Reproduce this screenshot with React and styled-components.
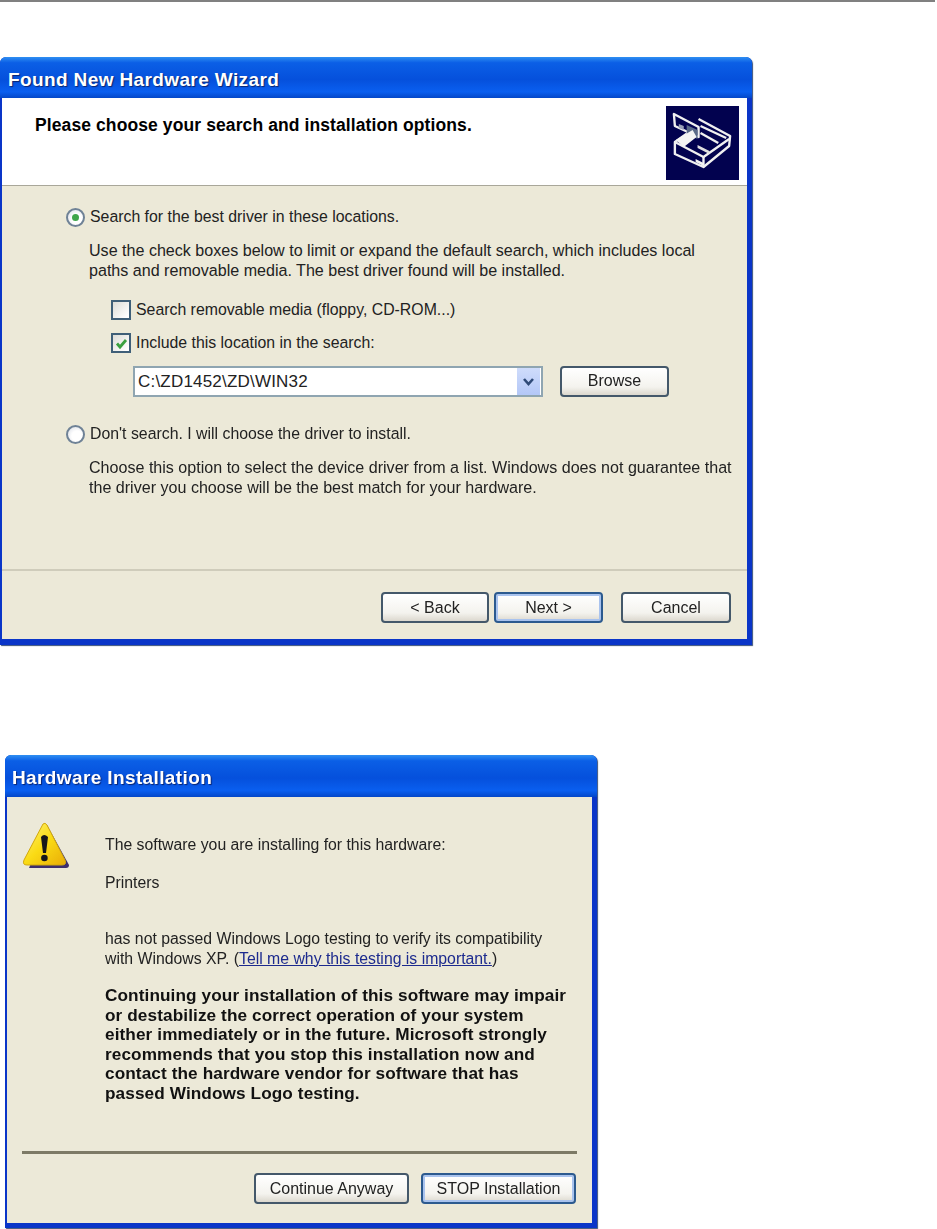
import React from "react";
import styled, { createGlobalStyle } from "styled-components";

const Global = createGlobalStyle`
  html, body { margin: 0; background: #fff; }
  body { font-family: "Liberation Sans", Arial, sans-serif; color: #222; }
`;

const Page = styled.div`
  width: 937px;
  height: 1229px;
  overflow: hidden;
  filter: blur(0.35px);
`;

const Rule = styled.div`
  height: 2px;
  width: 935px;
  background: #808080;
  margin-bottom: 55px;
`;

const Window = styled.div`
  display: flex;
  flex-direction: column;
  box-sizing: border-box;
  width: ${(p) => p.$w}px;
  height: ${(p) => p.$h}px;
  margin-left: ${(p) => p.$left || 0}px;
  margin-top: ${(p) => p.$top || 0}px;
  background: #0a35c8;
  border-radius: 6px 6px 0 0;
  padding: 0 5px ${(p) => p.$foot}px 2px;
  box-shadow: 1px 1px 1px #39507a;
`;

const TitleBar = styled.div`
  flex: none;
  height: ${(p) => p.$h}px;
  box-sizing: border-box;
  margin: 0 -5px 0 -2px;
  padding: 4px 0 0 ${(p) => p.$pad}px;
  display: flex;
  align-items: center;
  border-radius: 6px 6px 0 0;
  background: linear-gradient(180deg, #2f8ff2 0%, #0b5fe6 14%, #0550dc 55%, #0a5ff0 85%, #0447c8 100%);
  color: #fff;
  font-size: 19px;
  font-weight: bold;
  letter-spacing: 0.38px;
  text-shadow: 1px 1px 1px #0a2470;
`;

const Header = styled.div`
  flex: none;
  height: 88px;
  box-sizing: border-box;
  background: #fff;
  border-bottom: 1px solid #a9a79a;
  display: flex;
  justify-content: space-between;
  padding: 8px 8px 0 33px;
`;

const HeaderText = styled.div`
  font-size: 17.5px;
  font-weight: bold;
  letter-spacing: 0.1px;
  color: #000;
  line-height: 20px;
  margin-top: 9px;
`;

const Body = styled.div`
  flex: 1;
  background: #ece9d8;
  display: flex;
  flex-direction: column;
  padding-top: ${(p) => p.$top || 0}px;
`;

const Row = styled.div`
  display: flex;
  align-items: center;
  height: ${(p) => p.$h || 20}px;
  margin-top: ${(p) => p.$mt || 0}px;
  margin-left: ${(p) => p.$ml || 0}px;
`;

const Label = styled.span`
  font-size: 15.85px;
  line-height: 20px;
  white-space: nowrap;
  margin-left: 5px;
`;

const Para = styled.div`
  font-size: ${(p) => p.$size || 16.08}px;
  line-height: ${(p) => p.$lh || 20}px;
  white-space: pre;
  margin-top: ${(p) => p.$mt || 13}px;
  margin-left: ${(p) => p.$ml || 0}px;
`;

const Radio = styled.span`
  flex: none;
  width: 19px;
  height: 19px;
  box-sizing: border-box;
  border-radius: 50%;
  border: 2px solid #6f8296;
  background: radial-gradient(circle at 60% 60%, #fff 40%, #d5d9e2 100%);
  display: flex;
  align-items: center;
  justify-content: center;
  &::after {
    content: "";
    display: ${(p) => (p.$on ? "block" : "none")};
    width: 7px;
    height: 7px;
    border-radius: 50%;
    background: #3fa64a;
  }
`;

const Check = styled.span`
  flex: none;
  width: 20px;
  height: 20px;
  box-sizing: border-box;
  border: 2px solid #3f5f78;
  background: linear-gradient(135deg, #dcdcd7 0%, #fff 90%);
  display: flex;
  align-items: center;
  justify-content: center;
`;

const Combo = styled.div`
  width: 410px;
  height: 31px;
  margin-top: 1px;
  box-sizing: border-box;
  border: 2px solid #8fa5b1;
  background: #fff;
  display: flex;
  align-items: center;
  justify-content: space-between;
  padding: 0 1px 0 3px;
  font-size: 17px;
  letter-spacing: 0.2px;
`;

const ComboArrow = styled.span`
  width: 23px;
  height: 27px;
  background: linear-gradient(180deg, #cfdcfb, #b3c7f7);
  display: flex;
  align-items: center;
  justify-content: center;
`;

const Button = styled.div`
  flex: none;
  width: ${(p) => p.$w}px;
  height: 31px;
  box-sizing: border-box;
  margin-left: ${(p) => p.$ml || 0}px;
  border: 2px solid ${(p) => (p.$focus ? "#2c5a8f" : "#44586a")};
  border-radius: 4px;
  background: linear-gradient(180deg, #fff 0%, #f4f3ee 70%, #dcd8ce 100%);
  box-shadow: ${(p) => (p.$focus ? "inset 0 0 0 2px #a9c3ee" : "none")};
  display: flex;
  align-items: center;
  justify-content: center;
  font-size: 16px;
  color: #222;
`;

const Footer = styled.div`
  margin-top: auto;
  flex: none;
  border-top: 2px solid #cfccbb;
  height: 70px;
  box-sizing: border-box;
  padding: 21px 16px 0 0;
  display: flex;
  justify-content: flex-end;
`;

const BoldBlock = styled.div`
  font-size: 17.2px;
  font-weight: bold;
  letter-spacing: 0.1px;
  color: #111;
  line-height: 19.6px;
  margin-top: 18px;
  white-space: pre-line;
`;

const Link = styled.span`
  color: #1c2a8e;
  text-decoration: underline;
`;

const Columns = styled.div`
  display: flex;
  padding-top: 25px;
`;

const IconSlot = styled.div`
  flex: none;
  width: 98px;
  padding-left: 15px;
  box-sizing: border-box;
`;

const Divider = styled.div`
  height: 3px;
  background: #7d7a66;
  margin: auto 15px 0 15px;
`;

const DialogButtons = styled.div`
  display: flex;
  justify-content: flex-end;
  padding: 19px 16px 19px 0;
`;

const HardwareIcon = () => (
  <svg width="73" height="74" viewBox="0 0 74 74" preserveAspectRatio="none">
    <rect width="74" height="74" fill="#02024f" />
    <g fill="none" stroke="#f0f0f0" strokeWidth="2.4" strokeLinejoin="round">
      <path d="M8 8 L33 21 L33 31 L9 20 Z" />
      <path d="M33 13 L65 30 L64 40 L38 61 L9 48 L9 36 L22 27" />
      <path d="M9 36 L38 51 L64 33" />
      <path d="M38 51 L38 61" />
      <path d="M35 20 L61 32" />
      <path d="M35 27 L53 37" />
    </g>
    <path d="M13 18 L18 20 L18 24 L13 22 Z" fill="#9aa0b8" />
    <path d="M21 19 L32 24 L32 33 L21 28 Z" fill="#5a6a88" />
    <path d="M10 34 L27 24 L31 31 L18 41 Z" fill="#f4f4f4" />
    <path d="M30 53 L38 57 L38 60 L30 56 Z" fill="#f4f4f4" />
    <path d="M32 39 L44 45 L44 48 L32 42 Z" fill="#e0e0e0" />
  </svg>
);

const WarningIcon = () => (
  <svg width="48" height="48" viewBox="0 0 48 48">
    <defs>
      <linearGradient id="warnFill" x1="0" y1="0" x2="1" y2="1">
        <stop offset="0" stopColor="#fff27a" />
        <stop offset="0.5" stopColor="#fadb14" />
        <stop offset="1" stopColor="#e9ac07" />
      </linearGradient>
    </defs>
    <path d="M25 3 L47 43 Q47 46 44 46 L7 46 Z" fill="#3d2f6e" />
    <path
      d="M21 2 Q23 0 25 3 L43 38 Q45 43 40 43 L5 43 Q0 43 2 38 Z"
      fill="url(#warnFill)"
      stroke="#d2a80c"
      strokeWidth="1"
    />
    <path d="M19 15 Q22 11 26 15 L24 31 L21 31 Z" fill="#17171b" />
    <circle cx="22.4" cy="36" r="3.3" fill="#17171b" />
  </svg>
);

const Tick = () => (
  <svg width="13" height="13" viewBox="0 0 13 13">
    <path d="M2 6.5 L5 10 L11 3" fill="none" stroke="#3aa03f" strokeWidth="2.8" />
  </svg>
);

const Chevron = () => (
  <svg width="13" height="10" viewBox="0 0 13 10">
    <path d="M2 2 L6.5 7 L11 2" fill="none" stroke="#2f4a78" strokeWidth="2.6" />
  </svg>
);

export default function App() {
  return (
    <Page>
      <Global />
      <Rule />

      <Window $w={752} $h={588} $foot={6}>
        <TitleBar $h={41} $pad={8}>Found New Hardware Wizard</TitleBar>
        <Header>
          <HeaderText>Please choose your search and installation options.</HeaderText>
          <HardwareIcon />
        </Header>
        <Body $top={21}>
          <Row $ml={64}>
            <Radio $on />
            <Label>Search for the best driver in these locations.</Label>
          </Row>
          <Para $ml={87}>
            {"Use the check boxes below to limit or expand the default search, which includes local\npaths and removable media. The best driver found will be installed."}
          </Para>
          <Row $ml={109} $mt={20}>
            <Check />
            <Label>Search removable media (floppy, CD-ROM...)</Label>
          </Row>
          <Row $ml={109} $mt={13}>
            <Check><Tick /></Check>
            <Label>Include this location in the search:</Label>
          </Row>
          <Row $ml={131} $mt={12} $h={32}>
            <Combo>
              C:\ZD1452\ZD\WIN32
              <ComboArrow><Chevron /></ComboArrow>
            </Combo>
            <Button $w={109} $ml={17}>Browse</Button>
          </Row>
          <Row $ml={64} $mt={27}>
            <Radio />
            <Label>Don't search. I will choose the driver to install.</Label>
          </Row>
          <Para $ml={87}>
            {"Choose this option to select the device driver from a list. Windows does not guarantee that\nthe driver you choose will be the best match for your hardware."}
          </Para>
          <Footer>
            <Button $w={108}>&lt; Back</Button>
            <Button $w={109} $ml={5} $focus>Next &gt;</Button>
            <Button $w={110} $ml={18}>Cancel</Button>
          </Footer>
        </Body>
      </Window>

      <Window $w={592} $h={473} $left={5} $top={110} $foot={5}>
        <TitleBar $h={42} $pad={7}>Hardware Installation</TitleBar>
        <Body>
          <Columns>
            <IconSlot><WarningIcon /></IconSlot>
            <div>
              <Para $mt={13} $size={15.8}>The software you are installing for this hardware:</Para>
              <Para $mt={18} $size={15.8}>Printers</Para>
              <Para $mt={36} $size={15.8} $lh={19.5}>
                has not passed Windows Logo testing to verify its compatibility
                <br />
                with Windows XP. (<Link>Tell me why this testing is important.</Link>)
              </Para>
              <BoldBlock>
                {"Continuing your installation of this software may impair\nor destabilize the correct operation of your system\neither immediately or in the future. Microsoft strongly\nrecommends that you stop this installation now and\ncontact the hardware vendor for software that has\npassed Windows Logo testing."}
              </BoldBlock>
            </div>
          </Columns>
          <Divider />
          <DialogButtons>
            <Button $w={155}>Continue Anyway</Button>
            <Button $w={155} $ml={12} $focus>STOP Installation</Button>
          </DialogButtons>
        </Body>
      </Window>
    </Page>
  );
}
